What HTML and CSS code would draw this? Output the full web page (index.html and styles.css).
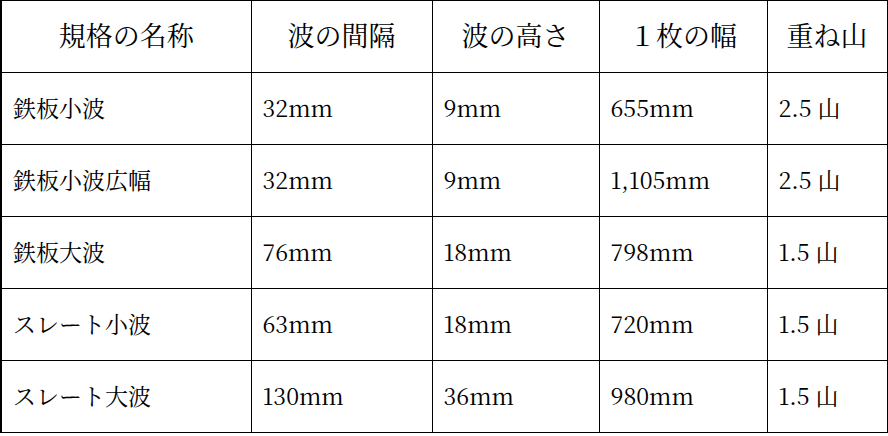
FILE: index.html
```html
<!DOCTYPE html>
<html lang="ja">
<head>
<meta charset="utf-8">
<link rel="stylesheet" href="styles.css">
</head>
<body>
<table class="spec">
  <colgroup>
    <col class="c1"><col class="c2"><col class="c3"><col class="c4"><col class="c5">
  </colgroup>
  <thead>
    <tr><th>規格の名称</th><th>波の間隔</th><th>波の高さ</th><th>１枚の幅</th><th>重ね山</th></tr>
  </thead>
  <tbody>
    <tr><td>鉄板小波</td><td>32mm</td><td>9mm</td><td>655mm</td><td>2.5 山</td></tr>
    <tr><td>鉄板小波広幅</td><td>32mm</td><td>9mm</td><td>1,105mm</td><td>2.5 山</td></tr>
    <tr><td>鉄板大波</td><td>76mm</td><td>18mm</td><td>798mm</td><td>1.5 山</td></tr>
    <tr><td>スレート小波</td><td>63mm</td><td>18mm</td><td>720mm</td><td>1.5 山</td></tr>
    <tr><td>スレート大波</td><td>130mm</td><td>36mm</td><td>980mm</td><td>1.5 山</td></tr>
  </tbody>
</table>
</body>
</html>
```
FILE: styles.css
```css
html, body {
  margin: 0;
  padding: 0;
  background: #fff;
}
.spec {
  border-collapse: collapse;
  table-layout: fixed;
  width: 886px;
  font-family: "Noto Serif CJK JP", "Liberation Serif", "Noto Sans CJK JP", serif;
  color: #000;
}
.c1 { width: 250px; }
.c2 { width: 181px; }
.c3 { width: 167px; }
.c4 { width: 168px; }
.c5 { width: 120px; }
.spec th, .spec td {
  border: 1px solid #000;
  height: 72px;
  box-sizing: border-box;
  padding: 0 0 3px 11px;
  vertical-align: middle;
}
.spec th {
  font-weight: normal;
  font-size: 27px;
  text-align: center;
  padding: 0 0 4px 0;
}
.spec td {
  font-size: 23px;
  text-align: left;
}
.spec tr > :first-child {
  border-left-width: 2px;
}
```
